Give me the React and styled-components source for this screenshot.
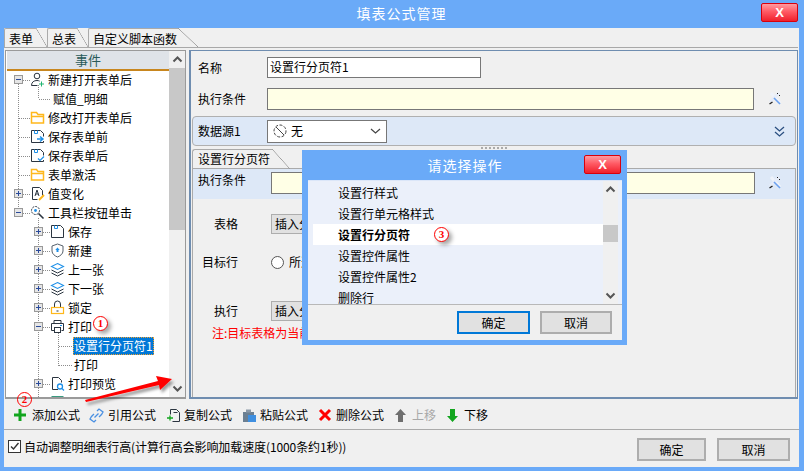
import React from "react";
import styled, { createGlobalStyle } from "styled-components";

const Global = createGlobalStyle`
  html, body { margin: 0; padding: 0; background: #6aaaf8; }
  * { box-sizing: border-box; }
  body { font-family: "Noto Sans CJK SC", "Liberation Sans", sans-serif; font-size: 12px; color: #000; }
`;

const Window = styled.div`
  position: relative; width: 804px; height: 471px; background: #6aaaf8; overflow: hidden;
  display: flex; flex-direction: column; padding: 0 5px 4px 4px; line-height: 16px;
`;
const TitleBar = styled.div`
  height: 28px; display: grid; grid-template-columns: 1fr auto 1fr; align-items: start; flex: none;
`;
const Title = styled.div`
  color: #fff; font-size: 14px; letter-spacing: 1px; line-height: 18px; padding-top: ${p => p.$top || 4}px;
`;
const CloseBtn = styled.div`
  justify-self: end; width: ${p => p.$w || 37}px; height: 19px; margin-top: ${p => p.$mt || 3}px; margin-right: ${p => p.$mr || 1}px;
  background: linear-gradient(#ff9aa0, #ff5a64 45%, #f0202c); border: 1px solid #d8000c; border-radius: 2px;
  color: #fff; font: bold 13px/17px "Liberation Sans", sans-serif; text-align: center;
`;
const Content = styled.div`
  flex: 1; background: #f0f0f0; display: flex; flex-direction: column; min-height: 0;
`;
const TabStrip = styled.div`
  height: 20px; flex: none; display: flex; border-bottom: 1px solid #a8a8a8; margin-right: 1px;
`;
const Tab = styled.div`
  position: relative; height: 19px; padding: 1px 1px 0 4px; width: ${p => p.$w}px; margin-right: ${p => p.$mr}px;
  line-height: 17px; border-left: 1px solid #aaa; border-top: 1px solid #aaa; border-radius: 2px 0 0 0; white-space: nowrap;
  background: #f0f0f0;
  &::after {
    content: ""; position: absolute; left: 100%; top: -1px; width: ${p => p.$sl || 11}px; height: 19px;
    background: linear-gradient(to top right, transparent calc(50% - .6px), #999 50%, transparent calc(50% + .6px));
  }
`;
const Main = styled.div`
  flex: 1; min-height: 0; display: flex; padding: 2px 0 0 1px; gap: 3px;
`;
const TreeBox = styled.div`
  width: 181px; flex: none; border: 1px solid #9a9a9a; border-bottom-width: 2px; background: #fff; display: flex; position: relative;
`;
const TreePane = styled.div`
  flex: 1; min-width: 0; display: flex; flex-direction: column; padding-left: 1px; overflow: hidden;
`;
const TreeHead = styled.div`
  height: 20px; flex: none; background: #dfe3e8; border-bottom: 2px solid #c8861e; color: #2a5a5a; text-align: center; font-size: 13px; line-height: 18px; position: relative; z-index: 1;
`;
const TreeList = styled.div`
  position: relative; flex: 1; overflow: hidden; margin-top: -1px;
`;
const Guides = styled.svg`
  position: absolute; left: 0; top: 1px;
`;
const Row = styled.div`
  position: relative; height: 19px; display: flex; align-items: center; padding-left: ${p => p.$pad}px; white-space: nowrap;
`;
const Slot = styled.span`
  width: 16px; flex: none; display: flex; align-items: center;
`;
const Expander = styled.span`
  width: 9px; height: 9px; border: 1px solid #999; background: #e6e6e6; display: block; position: relative;
  &::before { content: ""; position: absolute; left: 1px; top: 3px; width: 5px; height: 1px; background: #2a4a9a; }
  &::after { content: ""; position: absolute; left: 3px; top: 1px; width: 1px; height: 5px; background: ${p => (p.$open ? "transparent" : "#2a4a9a")}; }
`;
const IconSlot = styled.span`
  width: 15px; height: 16px; margin-right: 3px; flex: none; display: flex; align-items: center; justify-content: center;
`;
const Selected = styled.span`
  background: #0078d7; color: #fff; outline: 1px dotted #f0a030; outline-offset: -1px; height: 18px; line-height: 17px; padding: 0 1px; margin-left: -1px;
`;
const Scroll = styled.div`
  width: ${p => p.$w || 16}px; flex: none; background: #f0f0f0; display: flex; flex-direction: column; align-items: center; position: relative;
`;
const ScrollBtn = styled.div`
  height: 17px; width: 100%; flex: none; display: flex; align-items: center; justify-content: center; margin-top: ${p => (p.$end ? "auto" : 0)};
`;
const Thumb = styled.div`
  width: 100%; height: ${p => p.$h}px; flex: none; background: #c8c8c8; margin-top: ${p => p.$mt || 0}px;
`;
const Panel = styled.div`
  flex: 1; min-width: 0; margin-right: 1px; border: 1px solid #6f8db0; border-bottom-width: 2px; border-left-width: 2px; display: flex; flex-direction: column; overflow: hidden;
`;
const FormRow = styled.div`
  display: flex; align-items: center; height: ${p => p.$h}px; margin-top: ${p => p.$mt}px; padding-left: 7px; flex: none;
`;
const Label = styled.div`
  width: ${p => p.$w || 69}px; flex: none; padding-left: ${p => p.$pl || 0}px; white-space: nowrap;
`;
const Input = styled.div`
  width: ${p => p.$w}px; height: ${p => p.$h}px; background: ${p => p.$bg || "#fff"}; border: 1px solid #777; padding-left: 2px; line-height: ${p => p.$h - 3}px; flex: none;
`;
const ToolIcon = styled.span`
  margin-left: ${p => p.$ml}px; display: flex; margin-top: ${p => p.$mt || 0}px;
`;
const Band = styled.div`
  height: 30px; margin: 6px 1px 0 1px; background: #dde8f7; border: 1px solid #b0b0b0; border-radius: 4px; display: flex; align-items: center; padding-left: 5px; flex: none;
`;
const Combo = styled.div`
  width: 120px; height: 23px; background: #fff; border: 1px solid #777; display: flex; align-items: center; padding: 0 5px; gap: 4px;
`;
const Push = styled.span`margin-left: auto; display: flex; margin-right: ${p => p.$mr || 0}px;`;
const Splitter = styled.div`
  height: 3px; flex: none; display: flex; justify-content: center; gap: 2px; padding-top: 1px;
  & > i { width: 2px; height: 2px; background: #aaa; display: block; }
`;
const SubTab = styled.div`
  position: relative; height: 19px; width: 80px; margin-left: 1px; flex: none; padding-left: 5px; line-height: 18px; border-left: 1px solid #aaa; border-top: 1px solid #aaa; border-radius: 3px 0 0 0; white-space: nowrap;
  &::after {
    content: ""; position: absolute; left: 100%; top: -1px; width: 18px; height: 20px;
    background: linear-gradient(to top right, transparent calc(50% - .6px), #999 50%, transparent calc(50% + .6px));
  }
`;
const SubPanel = styled.div`
  flex: 1; margin: 0 1px; border: 1px solid #aaa; border-bottom: none; min-height: 0;
`;
const SubBand = styled.div`
  height: 30px; background: #dde8f7; display: flex; align-items: flex-start; padding: 3px 0 0 5px;
`;
const PlainSelect = styled.div`
  width: 200px; height: 20px; background: #e1e1e1; border: 1px solid #adadad; padding-left: 3px; line-height: 18px; white-space: nowrap; overflow: hidden;
`;
const Radio = styled.span`
  width: 13px; height: 13px; border: 1px solid #555; border-radius: 50%; background: #fff; margin-right: 5px; flex: none;
`;
const Note = styled.div`
  color: #f00; padding-left: 19px; margin-top: 4px; white-space: nowrap;
`;
const Toolbar = styled.div`
  height: 31px; flex: none; display: flex; align-items: center; border-bottom: 1px solid #aaa; padding: 2px 0 0 9px;
`;
const ToolItem = styled.div`
  display: flex; align-items: center; width: ${p => p.$w}px; flex: none; color: ${p => p.$off ? "#a8a8a8" : "#000"}; white-space: nowrap;
`;
const ToolGlyph = styled.span`
  width: ${p => p.$w || 19}px; flex: none; display: flex;
`;
const Footer = styled.div`
  height: 37px; flex: none; display: flex; align-items: flex-start; padding: 8px 9px 0 4px; gap: 11px;
`;
const Check = styled.span`
  width: 13px; height: 13px; margin-top: 2px; background: #fff; border: 1px solid #333; flex: none; display: flex; margin-right: -8px;
`;
const CheckText = styled.span`
  margin-top: 1px; margin-right: auto; white-space: nowrap; letter-spacing: -.1px;
`;
const Btn = styled.div`
  width: ${p => p.$w || 70}px; height: 23px; background: #e1e1e1; border: ${p => (p.$focus ? "2px solid #0078d7" : "2px solid #adadad")};
  display: flex; align-items: center; justify-content: center; flex: none;
`;
const Badge = styled.span`
  display: inline-flex; align-items: center; justify-content: center; width: 15px; height: 15px; border: 1.5px solid #f00; border-radius: 50%;
  color: #f00; font: bold 11px/1 "Liberation Serif", serif; background: #fff; box-shadow: 3px 3px 4px rgba(0,0,0,.35); flex: none;
  margin-left: ${p => p.$ml || 0}px; margin-top: ${p => p.$mt || 0}px;
`;
const FloatBadge = styled(Badge)`
  position: absolute; left: 17px; top: 392px; background: transparent; box-shadow: none;
`;
const ArrowLayer = styled.svg`
  position: absolute; left: 70px; top: 365px; pointer-events: none;
`;
const Dialog = styled.div`
  position: absolute; left: 302px; top: 150px; width: 325px; height: 195px; background: #6aaaf8;
  display: flex; flex-direction: column; padding: 0 5px 5px 6px;
`;
const DialogHead = styled.div`
  height: 30px; flex: none; display: grid; grid-template-columns: 1fr auto 1fr; align-items: start;
`;
const DialogBody = styled.div`
  flex: 1; min-height: 0; display: flex; flex-direction: column; background: #f0f0f0;
`;
const DialogList = styled.div`
  height: 124px; flex: none; background: #ebf0fa; border-top: 1px solid #dbe6f8; display: flex; overflow: hidden; padding-left: 5px; padding-right: 4px;
`;
const DialogRows = styled.div`
  flex: 1; min-width: 0; padding-top: 1px;
`;
const DialogRow = styled.div`
  height: 21px; line-height: 20px; padding-left: 25px; display: flex; align-items: center; white-space: nowrap;
  background: ${p => (p.$sel ? "#fff" : "transparent")}; font-weight: ${p => (p.$sel ? 700 : 400)};
`;
const DialogFoot = styled.div`
  flex: 1; display: flex; justify-content: flex-end; align-items: flex-start; gap: 10px; padding: 6px 10px 0 0; border-top: 1px solid #b8b8b8;
`;

const S = { fill: "none", stroke: "#2b3540", strokeWidth: 1 };
const Svg = ({ w = 15, h = 15, children }) => <svg width={w} height={h} viewBox={`0 0 ${w} ${h}`}>{children}</svg>;

const UserAdd = () => <Svg><circle cx="7" cy="4" r="2.8" {...S}/><path d="M1.5 13.5c0-3.5 2.5-5 5.5-5 1 0 2 .2 2.6.6M1.5 13.5h6" {...S}/><path d="M11.5 9.5v5M9 12h5" stroke="#22b573" fill="none"/></Svg>;
const Folder = () => <Svg><path d="M1.500 13V2.500h5l1.500 2h5.500V13z M1.500 6.500h12" fill="none" stroke="#ffb81c" strokeWidth="1.500"/></Svg>;
const Save = ({ mark }) => <Svg><path d="M1.500 1.500h9l3 3v3M13.500 12v1.500h-12v-12" {...S}/><path d="M4.500 1.500v3h3v-3" fill="none" stroke="#1e90e8"/>{mark === "arrow" && <path d="M7 10h5M10 7.500l3 2.500-3 2.500" fill="none" stroke="#1e90e8" strokeWidth="1.400"/>}{mark === "check" && <path d="M8 10.500l2 2 4-4" fill="none" stroke="#1e90e8" strokeWidth="1.200"/>}</Svg>;
const PlainSave = () => <Svg><path d="M1.500 1.500h9l3 3v9h-12z" {...S}/><path d="M4.500 1.500v3h3v-3" fill="none" stroke="#1e90e8"/></Svg>;
const DocA = () => <Svg><path d="M2.500 1.500h7l3 3v5M2.500 1.500v12h5" {...S}/><path d="M5 10l2-6 2 6M5.800 8h2.400" fill="none" stroke="#2b3540"/><path d="M9 14l5-5" stroke="#ffb81c" strokeWidth="2"/></Svg>;
const Tools = () => <Svg><circle cx="5.500" cy="5.500" r="4" {...S} strokeDasharray="2 1"/><circle cx="5.500" cy="5.500" r="1.400" fill="#1e90e8"/><path d="M8.500 8.500l5 5" stroke="#2b3540" strokeWidth="1.600"/></Svg>;
const Shield = () => <Svg><path d="M7.500 1l5.500 2v5c0 3-3 5-5.500 6C5 13 2 11 2 8V3z" {...S} stroke="#56616c"/><path d="M7.500 4.500l2.200 2.500H8.500v2h-2V7H5.300z" fill="#1e90e8"/></Svg>;
const Layers = () => <Svg><path d="M7.500 1.500l6 3-6 3-6-3z" fill="none" stroke="#1e90e8" strokeWidth="1.100"/><path d="M1.500 8l6 3 6-3" fill="none" stroke="#2b3540"/><path d="M1.500 11l6 3 6-3" fill="none" stroke="#2b3540"/></Svg>;
const Lock = () => <Svg><path d="M4.500 7V4a3 3 0 0 1 6 0v3" {...S}/><rect x="1.500" y="7.500" width="12" height="6" fill="none" stroke="#ffb81c" strokeWidth="1.200"/><path d="M6.500 11h2" stroke="#2b3540"/></Svg>;
const Printer = () => <Svg><path d="M4 4V1.500h7V4M1.500 11.500v-7h12v7h-2M4 11.500H1.500" {...S}/><rect x="4.500" y="8.500" width="6" height="5" {...S}/><path d="M10 6.500h2" stroke="#1e90e8"/></Svg>;
const Preview = () => <Svg><path d="M8 13.500H2.500v-12h6l3 3v2" {...S}/><circle cx="10" cy="10.500" r="2.500" fill="none" stroke="#1e90e8" strokeWidth="1.300"/><path d="M12 12.500l2 2" stroke="#1e90e8" strokeWidth="1.300"/></Svg>;
const Sheet = () => <Svg><rect x="2" y="1.500" width="11" height="12" fill="#bfe6d8" stroke="#3a9a80"/></Svg>;
const Chevron = ({ up, c = "#555" }) => <svg width="11" height="7" viewBox="0 0 11 7"><path d={up ? "M1.500 5.500l4-4 4 4" : "M1.500 1.500l4 4 4-4"} fill="none" stroke={c} strokeWidth="2"/></svg>;
const Wrench = () => <Svg w={16} h={16}><path d="M4 2l9 10" stroke="#eef2fa" strokeWidth="3"/><path d="M12 2L3 11" stroke="#e6ecf8" strokeWidth="3"/><path d="M2.500 13l3-2" stroke="#222" strokeWidth="1.400"/><path d="M10 2.500h1M13 5l-1-1" stroke="#222"/><path d="M7 7l6 6" stroke="#6aa0f0" strokeWidth="1.600"/></Svg>;
const DoubleDown = () => <Svg w={13} h={13}><path d="M2 2l4.500 4 4.500-4M2 7l4.500 4 4.500-4" fill="none" stroke="#2a4f80" strokeWidth="1.300"/></Svg>;
const NoneIcon = () => <Svg w={14} h={14}><circle cx="7" cy="7" r="6" fill="none" stroke="#444" strokeDasharray="3 1.500"/><path d="M3 3l8 8" stroke="#444"/></Svg>;
const Caret = () => <svg width="11" height="6" viewBox="0 0 11 6"><path d="M1 1l4.500 4 4.500-4" fill="none" stroke="#444" strokeWidth="1.200"/></svg>;

const Plus = () => <Svg w={14} h={14}><path d="M7 1v12M1 7h12" stroke="#12a51e" strokeWidth="3"/></Svg>;
const LinkIcon = () => <Svg><path d="M8 3l2-2 4 3-1.500 2.500L10 9M7 12l-2 2-4-3 1.500-2.500L5 6M5.500 9.500l4-4" fill="none" stroke="#4a90e2" strokeWidth="1.300"/></Svg>;
const CopyIcon = () => <Svg><path d="M4.500 3V1.500h6l3 3v9h-7M4.500 6.500V3M7.500 4.500h4" {...S}/><path d="M1 10h6M4 7.500v5" stroke="#12a51e" strokeWidth="1.300"/></Svg>;
const PasteIcon = () => <Svg><rect x="1" y="4" width="11" height="10" fill="#6b7f92"/><rect x="4" y="1.500" width="5" height="3" fill="#8b99a8"/><rect x="6" y="7" width="8" height="7" fill="#3f8fe0"/></Svg>;
const Cross = () => <Svg w={14} h={14}><path d="M2 2l10 10M12 2L2 12" stroke="#f00" strokeWidth="3"/></Svg>;
const UpArrow = () => <svg width="11" height="13" viewBox="0 0 11 13"><path d="M5.500 0L11 6H8v7H3V6H0z" fill="#6e6e6e"/></svg>;
const DownArrow = () => <svg width="11" height="13" viewBox="0 0 11 13"><path d="M5.500 13L11 7H8V0H3v7H0z" fill="#12a51e"/></svg>;
const Tick = () => <svg width="11" height="11" viewBox="0 0 11 11"><path d="M2 5.500l2.500 2.500L9.500 2" fill="none" stroke="#333" strokeWidth="1.400"/></svg>;

const dotted = [
  [11.5, 9, 11.5, 142], [11.5, 9.5, 23, 9.5], [11.5, 47.5, 23, 47.5], [11.5, 66.5, 23, 66.5], [11.5, 85.5, 23, 85.5], [11.5, 104.5, 23, 104.5], [11.5, 123.5, 23, 123.5], [11.5, 142.5, 23, 142.5],
  [31.5, 14, 31.5, 28], [31.5, 28.5, 44, 28.5],
  [31.5, 147, 31.5, 330], [31.5, 161.5, 43, 161.5], [31.5, 180.5, 43, 180.5], [31.5, 199.5, 43, 199.5], [31.5, 218.5, 43, 218.5], [31.5, 237.5, 43, 237.5], [31.5, 256.5, 43, 256.5], [31.5, 313.5, 43, 313.5],
  [51.5, 262, 51.5, 294.5], [51.5, 275.5, 65, 275.5], [51.5, 294.5, 65, 294.5],
];

const tree = [
  { pad: 7, exp: "open", icon: <UserAdd />, text: "新建打开表单后" },
  { pad: 46, text: "赋值_明细" },
  { pad: 7, icon: <Folder />, text: "修改打开表单后" },
  { pad: 7, icon: <Save mark="arrow" />, text: "保存表单前" },
  { pad: 7, icon: <Save mark="check" />, text: "保存表单后" },
  { pad: 7, icon: <Folder />, text: "表单激活" },
  { pad: 7, exp: "closed", icon: <DocA />, text: "值变化" },
  { pad: 7, exp: "open", icon: <Tools />, text: "工具栏按钮单击" },
  { pad: 27, exp: "closed", icon: <PlainSave />, text: "保存" },
  { pad: 27, exp: "closed", icon: <Shield />, text: "新建" },
  { pad: 27, exp: "closed", icon: <Layers />, text: "上一张" },
  { pad: 27, exp: "closed", icon: <Layers />, text: "下一张" },
  { pad: 27, exp: "closed", icon: <Lock />, text: "锁定" },
  { pad: 27, exp: "open", icon: <Printer />, text: "打印", badge: "1" },
  { pad: 67, sel: true, text: "设置行分页符1" },
  { pad: 67, text: "打印" },
  { pad: 27, exp: "closed", icon: <Preview />, text: "打印预览" },
  { pad: 27, exp: "closed", icon: <Sheet />, text: "导出数据" },
];

const actions = ["设置行样式", "设置行单元格样式", "设置行分页符", "设置控件属性", "设置控件属性2", "删除行"];

const tools = [
  { w: 76, g: <Plus />, t: "添加公式" },
  { w: 77, g: <LinkIcon />, t: "引用公式" },
  { w: 76, g: <CopyIcon />, t: "复制公式", gw: 18 },
  { w: 76, g: <PasteIcon />, t: "粘贴公式", gw: 18 },
  { w: 77, g: <Cross />, t: "删除公式", gw: 18 },
  { w: 52, g: <UpArrow />, t: "上移", off: true, gw: 17 },
  { w: 50, g: <DownArrow />, t: "下移", gw: 17 },
];

export default function App() {
  return (
    <>
      <Global />
      <Window>
        <TitleBar>
          <span />
          <Title>填表公式管理</Title>
          <CloseBtn>X</CloseBtn>
        </TitleBar>
        <Content>
          <TabStrip>
            <Tab $w={32} $mr={11}>表单</Tab>
            <Tab $w={30} $mr={11}>总表</Tab>
            <Tab $w={90} $mr={20} $sl={20}>自定义脚本函数</Tab>
          </TabStrip>
          <Main>
            <TreeBox>
              <TreePane>
                <TreeHead>事件</TreeHead>
                <TreeList>
                  <Guides width="170" height="330">
                    {dotted.map(([x1, y1, x2, y2], i) => (
                      <line key={i} x1={x1} y1={y1} x2={x2} y2={y2} stroke="#8c8c8c" strokeDasharray="1 1" shapeRendering="crispEdges" />
                    ))}
                  </Guides>
                  {tree.map((r, i) => (
                    <Row key={i} $pad={r.pad}>
                      {r.icon && <Slot>{r.exp && <Expander $open={r.exp === "open"} />}</Slot>}
                      {r.icon && <IconSlot>{r.icon}</IconSlot>}
                      {r.sel ? <Selected>{r.text}</Selected> : <span>{r.text}</span>}
                      {r.badge && <Badge $ml={1} $mt={-7}>{r.badge}</Badge>}
                    </Row>
                  ))}
                </TreeList>
              </TreePane>
              <Scroll>
                <ScrollBtn><Chevron up /></ScrollBtn>
                <Thumb $h={162} />
                <ScrollBtn $end><Chevron /></ScrollBtn>
              </Scroll>
            </TreeBox>
            <Panel>
              <FormRow $h={21} $mt={6}>
                <Label>名称</Label>
                <Input $w={214} $h={21}>设置行分页符1</Input>
              </FormRow>
              <FormRow $h={22} $mt={10}>
                <Label>执行条件</Label>
                <Input $w={487} $h={22} $bg="#ffffe6" />
                <ToolIcon $ml={13}><Wrench /></ToolIcon>
              </FormRow>
              <Band>
                <Label>数据源1</Label>
                <Combo>
                  <NoneIcon /><span>无</span><Push><Caret /></Push>
                </Combo>
                <Push $mr={9}><DoubleDown /></Push>
              </Band>
              <Splitter>{[...Array(7)].map((_, i) => <i key={i} />)}</Splitter>
              <SubTab>设置行分页符</SubTab>
              <SubPanel>
                <SubBand>
                  <Label $w={73}>执行条件</Label>
                  <Input $w={484} $h={22} $bg="#ffffe6" />
                  <ToolIcon $ml={12} $mt={3}><Wrench /></ToolIcon>
                </SubBand>
                <FormRow $h={20} $mt={15}>
                  <Label $w={71} $pl={14}>表格</Label>
                  <PlainSelect>插入分页符</PlainSelect>
                </FormRow>
                <FormRow $h={20} $mt={18}>
                  <Label $w={71} $pl={2}>目标行</Label>
                  <Radio /><span>所选行</span>
                </FormRow>
                <FormRow $h={20} $mt={29}>
                  <Label $w={71} $pl={14}>执行</Label>
                  <PlainSelect>插入分页符</PlainSelect>
                </FormRow>
                <Note>注:目标表格为当前表单中的明细表</Note>
              </SubPanel>
            </Panel>
          </Main>
          <Toolbar>
            {tools.map((t, i) => (
              <ToolItem key={i} $w={t.w} $off={t.off}>
                <ToolGlyph $w={t.gw}>{t.g}</ToolGlyph>
                <span>{t.t}</span>
              </ToolItem>
            ))}
          </Toolbar>
          <Footer>
            <Check><Tick /></Check>
            <CheckText>自动调整明细表行高(计算行高会影响加载速度(1000条约1秒))</CheckText>
            <Btn $w={69}>确定</Btn>
            <Btn $w={73}>取消</Btn>
          </Footer>
        </Content>

        <ArrowLayer width="115" height="45" viewBox="70 365 115 45">
          <defs>
            <filter id="sh" x="-20%" y="-40%" width="140%" height="180%">
              <feDropShadow dx="2" dy="3" stdDeviation="1.500" floodColor="#000" floodOpacity=".4" />
            </filter>
          </defs>
          <path d="M85 400L158 381L156 376L172 379L160 390L159 385L86 402z" fill="#f00" filter="url(#sh)" />
        </ArrowLayer>
        <FloatBadge>2</FloatBadge>

        <Dialog>
          <DialogHead>
            <span />
            <Title $top={6}>请选择操作</Title>
            <CloseBtn $mt={5} $mr={0}>X</CloseBtn>
          </DialogHead>
          <DialogBody>
            <DialogList>
              <DialogRows>
                {actions.map((a, i) => (
                  <DialogRow key={a} $sel={i === 2}>
                    {a}
                    {i === 2 && <Badge $ml={24}>3</Badge>}
                  </DialogRow>
                ))}
              </DialogRows>
              <Scroll $w={15}>
                <ScrollBtn><Chevron up /></ScrollBtn>
                <Thumb $h={17} $mt={27} />
                <ScrollBtn $end><Chevron /></ScrollBtn>
              </Scroll>
            </DialogList>
            <DialogFoot>
              <Btn $w={73} $focus>确定</Btn>
              <Btn $w={72}>取消</Btn>
            </DialogFoot>
          </DialogBody>
        </Dialog>
      </Window>
    </>
  );
}
